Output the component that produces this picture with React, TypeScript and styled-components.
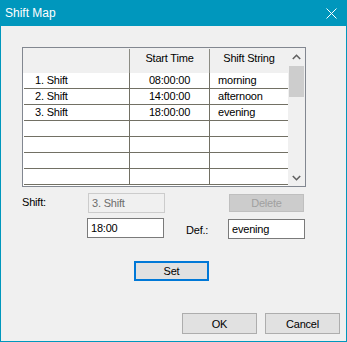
import React from "react";
import styled, { createGlobalStyle } from "styled-components";

const Global = createGlobalStyle`
  html, body { margin: 0; padding: 0; background: #f0f0f0; }
  body { font-family: "Liberation Sans", Arial, sans-serif; font-size: 11px; color: #000; }
  * { box-sizing: border-box; }
`;

const Window = styled.div`
  width: 347px;
  height: 342px;
  display: flex;
  flex-direction: column;
  border: 1px solid #0097bd;
  border-top: none;
  background: #f0f0f0;
`;

const TitleBar = styled.div`
  height: 26px;
  margin: 0 -1px;
  background: #0097bd;
  display: flex;
  align-items: center;
  justify-content: space-between;
  padding: 0 10px 0 5px;
  color: #fff;
  font-family: "Liberation Sans", Arial, sans-serif;
  font-size: 12px;
`;

const CloseBox = styled.div`
  width: 11px;
  height: 11px;
  display: flex;
  margin-right: 0;
`;

const Client = styled.div`
  flex: 1;
  display: flex;
  flex-direction: column;
  padding: 21px 0 0 21px;
`;

const ListBox = styled.div`
  width: 284px;
  height: 140px;
  border: 1px solid #828790;
  background: #fff;
  display: flex;
`;

const Grid = styled.div`
  width: 265px;
  display: flex;
  flex-direction: column;
`;

const HeaderRow = styled.div`
  height: 25px;
  display: flex;
  background: #f0f0f0;
`;

const HeaderCell = styled.div<{ $w: number; $last?: boolean }>`
  width: ${(p) => p.$w}px;
  height: 100%;
  border-right: ${(p) => (p.$last ? "none" : "1px solid #8c8c84")};
  text-align: center;
  padding-top: 3px;
  line-height: 13px;
  letter-spacing: -0.2px;
  margin-top: 1px;
`;

const Row = styled.div`
  height: 16px;
  display: flex;
  border-bottom: 1px solid #727064;
  margin-left: 1px;
`;

const Cell = styled.div<{ $w: number; $align: "left" | "center"; $pad: number; $last?: boolean }>`
  width: ${(p) => p.$w}px;
  height: 15px;
  line-height: 15px;
  border-right: ${(p) => (p.$last ? "none" : "1px solid #727064")};
  text-align: ${(p) => p.$align};
  padding-left: ${(p) => p.$pad}px;
  letter-spacing: -0.2px;
  white-space: nowrap;
  overflow: hidden;
`;

const ScrollBar = styled.div`
  width: 17px;
  background: #f0f0f0;
  display: flex;
  flex-direction: column;
`;

const ScrollArrow = styled.div`
  height: 17px;
  display: flex;
  align-items: center;
  justify-content: center;
`;

const Track = styled.div`
  flex: 1;
  display: flex;
  flex-direction: column;
  padding: 1px 1px 0 1px;
`;

const Thumb = styled.div`
  height: 31px;
  background: #cdcdcd;
`;

const FormRow = styled.div<{ $mt: number }>`
  display: flex;
  align-items: flex-start;
  margin-top: ${(p) => p.$mt}px;
`;

const Label = styled.div<{ $w: number; $ml?: number; $mt: number }>`
  width: ${(p) => p.$w}px;
  margin-left: ${(p) => p.$ml ?? 0}px;
  padding-top: ${(p) => p.$mt}px;
  letter-spacing: -0.2px;
`;

const TextBox = styled.div<{ $disabled?: boolean; $ml?: number; $mt?: number }>`
  width: 77px;
  height: 20px;
  margin-left: ${(p) => p.$ml ?? 0}px;
  margin-top: ${(p) => p.$mt ?? 0}px;
  border: 1px solid ${(p) => (p.$disabled ? "#cccccc" : "#7a7a7a")};
  background: ${(p) => (p.$disabled ? "#f0f0f0" : "#ffffff")};
  color: ${(p) => (p.$disabled ? "#6d6d6d" : "#000")};
  padding-left: 3px;
  line-height: 18px;
  letter-spacing: -0.2px;
`;

const Button = styled.div<{ $variant?: "default" | "disabled" | "focused"; $h?: number; $ml?: number; $mt?: number }>`
  width: 75px;
  height: ${(p) => p.$h ?? 21}px;
  margin-left: ${(p) => p.$ml ?? 0}px;
  margin-top: ${(p) => p.$mt ?? 0}px;
  display: flex;
  align-items: center;
  justify-content: center;
  letter-spacing: -0.2px;
  background: ${(p) => (p.$variant === "disabled" ? "#cccccc" : "#e1e1e1")};
  color: ${(p) => (p.$variant === "disabled" ? "#a0a0a0" : "#000")};
  border: ${(p) =>
    p.$variant === "focused"
      ? "2px solid #0078d7"
      : p.$variant === "disabled"
      ? "1px solid #bfbfbf"
      : "1px solid #adadad"};
`;

const Footer = styled.div`
  margin-top: auto;
  display: flex;
  justify-content: flex-end;
  gap: 8px;
  padding: 0 6px 7px 0;
`;

const cols = [107, 80, 78];

const rows: string[][] = [
  ["1. Shift", "08:00:00", "morning"],
  ["2. Shift", "14:00:00", "afternoon"],
  ["3. Shift", "18:00:00", "evening"],
  ["", "", ""],
  ["", "", ""],
  ["", "", ""],
  ["", "", ""],
];

const Chevron = ({ up }: { up?: boolean }) => (
  <svg width="9" height="6" viewBox="0 0 9 6">
    <polyline
      points={up ? "0.8,5 4.5,1.3 8.2,5" : "0.8,1 4.5,4.7 8.2,1"}
      fill="none"
      stroke="#606060"
      strokeWidth="1.6"
    />
  </svg>
);

export default function App() {
  return (
    <>
      <Global />
      <Window>
        <TitleBar>
          <span>Shift Map</span>
          <CloseBox>
            <svg width="11" height="11" viewBox="0 0 11 11">
              <path d="M0.5 0.5 L10.5 10.5 M10.5 0.5 L0.5 10.5" stroke="#fff" strokeWidth="1" />
            </svg>
          </CloseBox>
        </TitleBar>
        <Client>
          <ListBox>
            <Grid>
              <HeaderRow>
                <HeaderCell $w={cols[0]} />
                <HeaderCell $w={cols[1]}>Start Time</HeaderCell>
                <HeaderCell $w={cols[2]} $last>
                  Shift String
                </HeaderCell>
              </HeaderRow>
              {rows.map((r, i) => (
                <Row key={i}>
                  <Cell $w={cols[0] - 1} $align="left" $pad={11}>
                    {r[0]}
                  </Cell>
                  <Cell $w={cols[1]} $align="center" $pad={0}>
                    {r[1]}
                  </Cell>
                  <Cell $w={cols[2]} $align="left" $pad={8} $last>
                    {r[2]}
                  </Cell>
                </Row>
              ))}
            </Grid>
            <ScrollBar>
              <ScrollArrow>
                <Chevron up />
              </ScrollArrow>
              <Track>
                <Thumb />
              </Track>
              <ScrollArrow>
                <Chevron />
              </ScrollArrow>
            </ScrollBar>
          </ListBox>

          <FormRow $mt={6}>
            <Label $w={66} $mt={3}>
              Shift:
            </Label>
            <TextBox $disabled>3. Shift</TextBox>
            <Button $variant="disabled" $h={18} $ml={64} $mt={1}>
              Delete
            </Button>
          </FormRow>

          <FormRow $mt={5}>
            <TextBox $ml={65}>18:00</TextBox>
            <Label $w={42} $ml={22} $mt={6}>
              Def.:
            </Label>
            <TextBox $mt={1}>evening</TextBox>
          </FormRow>

          <FormRow $mt={22}>
            <Button $variant="focused" $h={20} $ml={112}>
              Set
            </Button>
          </FormRow>

          <Footer>
            <Button>OK</Button>
            <Button>Cancel</Button>
          </Footer>
        </Client>
      </Window>
    </>
  );
}
